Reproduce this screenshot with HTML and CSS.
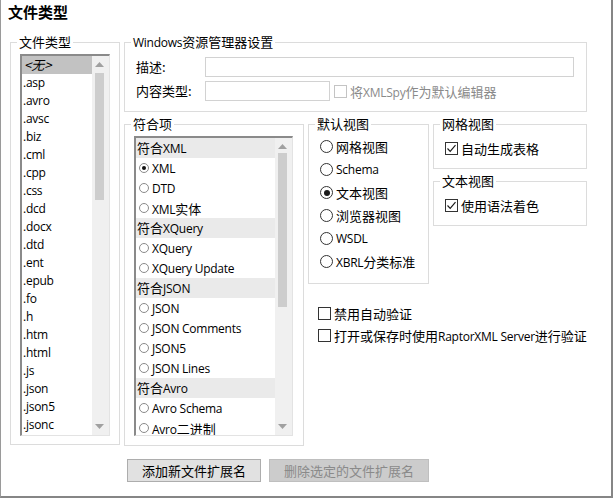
FILE: index.html
```html
<!DOCTYPE html>
<html lang="zh-CN">
<head>
<meta charset="utf-8">
<title>文件类型</title>
<link rel="stylesheet" href="styles.css">
</head>
<body>
<div class="window">
  <div class="title">文件类型</div>
  <div class="main">
    <fieldset class="group g-types">
      <legend>文件类型</legend>
      <div class="body b-types">
        <div class="listbox lb-types">
          <ul class="items">
            <li class="sel"><i>&lt;无&gt;</i></li>
            <li class="en">.asp</li>
            <li class="en">.avro</li>
            <li class="en">.avsc</li>
            <li class="en">.biz</li>
            <li class="en">.cml</li>
            <li class="en">.cpp</li>
            <li class="en">.css</li>
            <li class="en">.dcd</li>
            <li class="en">.docx</li>
            <li class="en">.dtd</li>
            <li class="en">.ent</li>
            <li class="en">.epub</li>
            <li class="en">.fo</li>
            <li class="en">.h</li>
            <li class="en">.htm</li>
            <li class="en">.html</li>
            <li class="en">.js</li>
            <li class="en">.json</li>
            <li class="en">.json5</li>
            <li class="en">.jsonc</li>
          </ul>
          <div class="vscroll">
            <span class="arrow"><span class="tri up"></span></span>
            <span class="track"><span class="thumb t1"></span></span>
            <span class="arrow"><span class="tri down"></span></span>
          </div>
        </div>
      </div>
    </fieldset>

    <div class="right">
      <fieldset class="group g-win">
        <legend><span class="en">Windows</span>资源管理器设置</legend>
        <div class="body b-win">
          <div class="form-row">
            <span class="form-label">描述:</span>
            <span class="textbox"></span>
          </div>
          <div class="form-row">
            <span class="form-label">内容类型:</span>
            <span class="textbox short"></span>
            <span class="check disabled"><span class="box"></span><span class="lbl">将<span class="en">XMLSpy</span>作为默认编辑器</span></span>
          </div>
        </div>
      </fieldset>

      <div class="lower">
        <fieldset class="group g-conf">
          <legend>符合项</legend>
          <div class="body b-conf">
            <div class="listbox lb-conf">
              <ul class="items conf">
                <li class="hdr">符合<span class="en">XML</span></li>
                <li><span class="sradio on"></span><span class="en">XML</span></li>
                <li><span class="sradio"></span><span class="en">DTD</span></li>
                <li><span class="sradio"></span><span><span class="en">XML</span>实体</span></li>
                <li class="hdr">符合<span class="en">XQuery</span></li>
                <li><span class="sradio"></span><span class="en">XQuery</span></li>
                <li><span class="sradio"></span><span class="en">XQuery Update</span></li>
                <li class="hdr">符合<span class="en">JSON</span></li>
                <li><span class="sradio"></span><span class="en">JSON</span></li>
                <li><span class="sradio"></span><span class="en">JSON Comments</span></li>
                <li><span class="sradio"></span><span class="en">JSON5</span></li>
                <li><span class="sradio"></span><span class="en">JSON Lines</span></li>
                <li class="hdr">符合<span class="en">Avro</span></li>
                <li><span class="sradio"></span><span class="en">Avro Schema</span></li>
                <li><span class="sradio"></span><span><span class="en">Avro</span>二进制</span></li>
              </ul>
              <div class="vscroll">
                <span class="arrow"><span class="tri up"></span></span>
                <span class="track"><span class="thumb t2"></span></span>
                <span class="arrow"><span class="tri down"></span></span>
              </div>
            </div>
          </div>
        </fieldset>

        <div class="views">
          <div class="views-top">
            <fieldset class="group g-default">
              <legend>默认视图</legend>
              <div class="body b-default">
                <div class="radio-row"><span class="radio"></span>网格视图</div>
                <div class="radio-row"><span class="radio"></span><span class="en">Schema</span></div>
                <div class="radio-row"><span class="radio on"></span>文本视图</div>
                <div class="radio-row"><span class="radio"></span>浏览器视图</div>
                <div class="radio-row"><span class="radio"></span><span class="en">WSDL</span></div>
                <div class="radio-row"><span class="radio"></span><span><span class="en">XBRL</span>分类标准</span></div>
              </div>
            </fieldset>
            <div class="side">
              <fieldset class="group g-small">
                <legend>网格视图</legend>
                <div class="body b-small">
                  <span class="check"><span class="box"><svg viewBox="0 0 13 13" width="13" height="13"><polyline points="2.5,6.5 5.2,9.3 10.5,3.2" fill="none" stroke="#1a1a1a" stroke-width="1.2"/></svg></span><span class="lbl">自动生成表格</span></span>
                </div>
              </fieldset>
              <fieldset class="group g-small">
                <legend>文本视图</legend>
                <div class="body b-small">
                  <span class="check"><span class="box"><svg viewBox="0 0 13 13" width="13" height="13"><polyline points="2.5,6.5 5.2,9.3 10.5,3.2" fill="none" stroke="#1a1a1a" stroke-width="1.2"/></svg></span><span class="lbl">使用语法着色</span></span>
                </div>
              </fieldset>
            </div>
          </div>
          <div class="checks">
            <span class="check"><span class="box"></span><span class="lbl">禁用自动验证</span></span>
            <span class="check"><span class="box"></span><span class="lbl">打开或保存时使用<span class="en">RaptorXML Server</span>进行验证</span></span>
          </div>
        </div>
      </div>
    </div>
  </div>
  <div class="buttons">
    <button class="btn b-add" type="button">添加新文件扩展名</button>
    <button class="btn b-del" type="button" disabled>删除选定的文件扩展名</button>
  </div>
</div>
</body>
</html>
```

FILE: styles.css
```css
* { box-sizing: border-box; }
html, body { margin: 0; padding: 0; background: #fff; }
body {
  font-family: "Noto Sans CJK SC", "Noto Sans", sans-serif;
  font-size: 13px;
  color: #000;
}
.en {
  font-family: "Open Sans", "Noto Sans", sans-serif;
  font-size: 12px;
  letter-spacing: -0.25px;
}
.window {
  width: 613px;
  height: 498px;
  border-left: 1px solid #9a9a9a;
  border-right: 2px solid #868686;
  border-bottom: 2px solid #868686;
  display: flex;
  flex-direction: column;
  background: #fff;
}
.title {
  height: 35px;
  padding: 2px 0 0 7px;
  font-size: 15px;
  line-height: 20px;
  font-weight: bold;
}
.main {
  display: flex;
  gap: 4px;
  padding-left: 9px;
  align-items: flex-start;
}

/* group boxes */
.group {
  margin: 0;
  padding: 0;
  min-width: 0;
  border: 1px solid #dcdcdc;
}
.group > legend {
  margin-left: 6px;
  padding: 0 2px;
  font-size: 13px;
  line-height: 14px;
}

.g-types { width: 110px; }
.b-types { padding: 5px 9px 8px 9px; }

/* list boxes */
.listbox {
  display: flex;
  border-style: solid;
  border-width: 2px 1px 1px 2px;
  border-color: #8a8a8a #e3e3e3 #e3e3e3 #8a8a8a;
  background: #fff;
  overflow: hidden;
}
.lb-types { width: 90px; height: 382px; }
.lb-conf { width: 159px; height: 300px; }
.items {
  list-style: none;
  margin: 0;
  padding: 0;
  flex: 1;
  min-width: 0;
  overflow: hidden;
}
.lb-types .items li {
  height: 18px;
  line-height: 18px;
  padding-left: 1px;
  white-space: nowrap;
}
.lb-types .items li.sel { background: #c2c2c2; }
.lb-types .items li.sel i { padding-left: 1px; }

.items.conf li {
  height: 20px;
  display: flex;
  align-items: center;
  padding-left: 3px;
  white-space: nowrap;
}
.items.conf li.hdr {
  display: block;
  line-height: 19px;
  background: #eaeaea;
  padding-left: 1px;
}
.sradio {
  width: 10px;
  height: 10px;
  border: 1px solid #8a8a8a;
  border-radius: 50%;
  margin-right: 3px;
  display: flex;
  align-items: center;
  justify-content: center;
  flex: none;
}
.sradio.on::after {
  content: "";
  width: 4px;
  height: 4px;
  border-radius: 50%;
  background: #111;
}

/* scrollbars */
.vscroll {
  width: 17px;
  flex: none;
  background: #f0f0f0;
  display: flex;
  flex-direction: column;
}
.arrow {
  height: 17px;
  flex: none;
  display: flex;
  align-items: center;
  padding-left: 3px;
}
.tri {
  width: 9px;
  height: 5px;
  background: #a0a0a0;
}
.tri.up { clip-path: polygon(50% 0, 100% 100%, 0 100%); }
.tri.down { clip-path: polygon(0 0, 100% 0, 50% 100%); }
.track { flex: 1; padding-left: 3px; }
.thumb {
  display: block;
  width: 9px;
  background: #cdcdcd;
}
.t1 { height: 127px; }
.t2 { height: 154px; margin-top: -2px; }

/* right column */
.right {
  width: 463px;
  display: flex;
  flex-direction: column;
}
.b-win { padding: 7px 12px 10px 11px; }
.form-row {
  display: flex;
  align-items: center;
  height: 20px;
}
.form-row + .form-row { margin-top: 4px; }
.form-label {
  width: 69px;
  flex: none;
  line-height: 20px;
}
.textbox {
  flex: 1;
  height: 20px;
  border: 1px solid #d2d2d2;
  background: #fff;
}
.textbox.short { flex: none; width: 125px; margin-right: 4px; }

/* checkboxes & radios */
.check {
  display: flex;
  align-items: center;
  white-space: nowrap;
}
.check .box {
  width: 13px;
  height: 13px;
  border: 1px solid #333;
  background: #fff;
  flex: none;
  margin-right: 3px;
  display: flex;
}
.check .box svg { margin: -1px; }
.check.disabled .box { border-color: #c4c4c4; }
.check.disabled .lbl { color: #8a8a8a; }

.lower {
  display: flex;
  gap: 4px;
  margin-top: 5px;
  align-items: flex-start;
}
.g-conf { width: 180px; }
.b-conf { padding: 5px 9px 9px 9px; }

.views {
  width: 279px;
  display: flex;
  flex-direction: column;
}
.views-top {
  display: flex;
  gap: 4px;
  align-items: flex-start;
}
.g-default { width: 121px; }
.b-default { padding: 4px 0 10px 11px; }
.radio-row {
  height: 23px;
  display: flex;
  align-items: center;
  white-space: nowrap;
}
.radio {
  width: 13px;
  height: 13px;
  border: 1px solid #333;
  border-radius: 50%;
  margin-right: 3px;
  flex: none;
  display: flex;
  align-items: center;
  justify-content: center;
}
.radio.on::after {
  content: "";
  width: 6px;
  height: 6px;
  border-radius: 50%;
  background: #1a1a1a;
}
.side {
  width: 154px;
  display: flex;
  flex-direction: column;
  gap: 5px;
}
.b-small {
  padding: 8px 0 11px 11px;
}
.b-small .check { height: 18px; }

.checks {
  margin-top: 18px;
  padding-left: 10px;
  display: flex;
  flex-direction: column;
}
.checks .check { height: 22px; }

/* buttons */
.buttons {
  margin-top: 13px;
  padding-left: 126px;
  display: flex;
  gap: 8px;
}
.btn {
  height: 23px;
  margin: 0;
  padding: 0;
  font-family: inherit;
  font-size: 13px;
  line-height: 21px;
  border: 1px solid #adadad;
  background: #e1e1e1;
  color: #000;
}
.b-add { width: 134px; }
.b-del {
  width: 160px;
  background: #cccccc;
  border-color: #bfbfbf;
  color: #8a8a8a;
}
```
